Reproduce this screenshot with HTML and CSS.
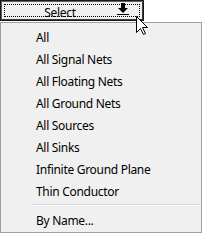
FILE: index.html
```html
<!DOCTYPE html>
<html>
<head>
<meta charset="utf-8">
<link rel="stylesheet" href="styles.css">
</head>
<body>
<div class="page">
  <div class="btn">
    <div class="focus">
      <span class="label">Select</span>
      <svg class="arrow" width="12" height="12" viewBox="0 0 12 12">
        <rect x="4" y="0" width="4" height="5" fill="#000"/>
        <path d="M1 5 H11 L6 10 Z" fill="#000"/>
        <rect x="0" y="11" width="12" height="1" fill="#000"/>
      </svg>
    </div>
  </div>
  <div class="menu">
    <div class="item">All</div>
    <div class="item">All Signal Nets</div>
    <div class="item">All Floating Nets</div>
    <div class="item">All Ground Nets</div>
    <div class="item">All Sources</div>
    <div class="item">All Sinks</div>
    <div class="item">Infinite Ground Plane</div>
    <div class="item">Thin Conductor</div>
    <div class="sep"></div>
    <div class="item">By Name...</div>
  </div>
  <svg class="cursor" width="13" height="20" viewBox="0 0 13 20">
    <path d="M0.5 0.5 V16.5 L4.5 12.5 L7.5 18.5 L9.5 17.5 L6.5 11.5 H11.5 Z" fill="#fff" stroke="#000" stroke-width="1" stroke-linejoin="miter"/>
  </svg>
</div>
</body>
</html>
```
FILE: styles.css
```css
html, body {
  margin: 0;
  padding: 0;
  background: #fff;
}
.page {
  position: relative;
  width: 202px;
  height: 233px;
  font-family: "Noto Sans", "DejaVu Sans", sans-serif;
  font-size: 12px;
  letter-spacing: -0.3px;
  color: #000;
}
.btn {
  box-sizing: border-box;
  width: 144px;
  height: 21px;
  margin-bottom: 1px;
  border: 1px solid #1a1a1a;
  box-shadow: inset 1px 1px 0 #5e5e5e, inset -1px -1px 0 #3a3a3a;
  background: #f0f0f0;
  padding: 2px;
}
.focus {
  box-sizing: border-box;
  height: 13px;
  margin: 1px;
  border: 1px dotted #000;
  display: flex;
  align-items: flex-start;
}
.label {
  width: 110px;
  text-align: center;
  line-height: 11px;
  padding-top: 2px;
  font-size: 12px;
}
.arrow {
  margin-left: 2px;
  margin-top: -2px;
}
.menu {
  box-sizing: border-box;
  width: 202px;
  height: 211px;
  border: 1px solid #a0a0a0;
  background: #f0f0f0;
  padding: 2px 0 2px 0;
  display: flex;
  flex-direction: column;
}
.item {
  box-sizing: border-box;
  height: 22px;
  line-height: 18px;
  padding-top: 4px;
  padding-left: 35px;
  white-space: nowrap;
}
.sep {
  height: 7px;
  margin: 0 2px 0 30px;
}
.sep::before {
  content: "";
  display: block;
  margin-top: 3px;
  height: 1px;
  background: #d7d7d7;
  border-bottom: 1px solid #fbfbfb;
}
.cursor {
  position: absolute;
  left: 136px;
  top: 16px;
}
```
